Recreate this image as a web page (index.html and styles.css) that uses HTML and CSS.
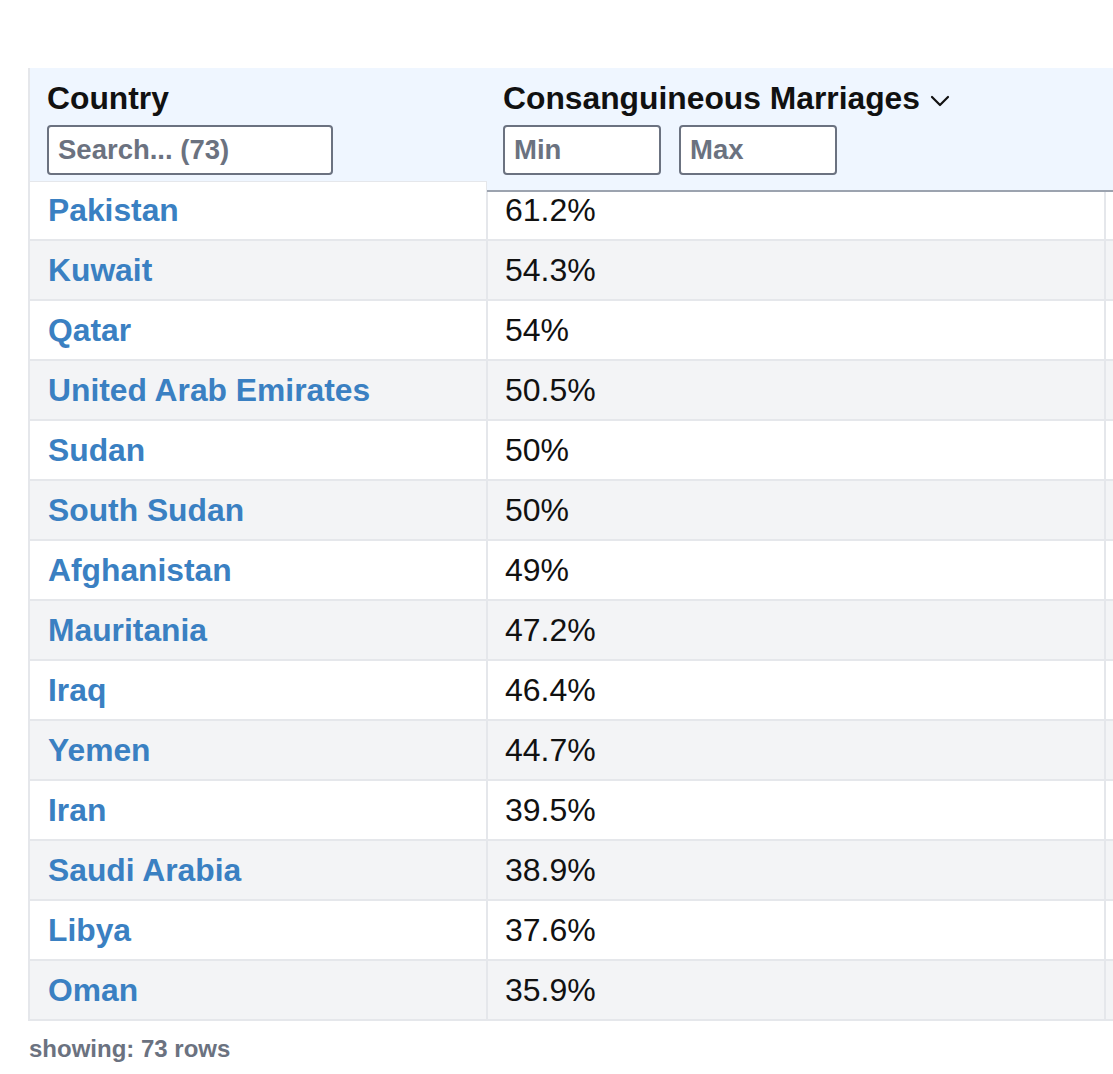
FILE: index.html
```html
<!DOCTYPE html>
<html lang="en">
<head>
<meta charset="utf-8">
<title>Consanguineous Marriages by Country</title>
<link rel="stylesheet" href="styles.css">
</head>
<body>
<div class="wrap">
  <table class="grid">
    <colgroup>
      <col class="col-country">
      <col class="col-value">
      <col class="col-extra">
    </colgroup>
    <thead>
      <tr>
        <th class="h-country">
          <div class="h-title">Country</div>
          <input class="f-search" type="text" placeholder="Search... (73)">
        </th>
        <th class="h-value">
          <div class="h-title">Consanguineous Marriages<svg class="chev" width="20" height="12" viewBox="0 0 20 12"><path d="M2 2 L10 10 L18 2" fill="none" stroke="#111" stroke-width="2.2" stroke-linecap="round" stroke-linejoin="round"/></svg></div>
          <div class="range">
            <input class="f-num" type="text" placeholder="Min">
            <input class="f-num" type="text" placeholder="Max">
          </div>
        </th>
        <th class="h-extra"></th>
      </tr>
    </thead>
    <tbody>
      <tr><td class="name"><a href="#">Pakistan</a></td><td class="val">61.2%</td><td></td></tr>
      <tr><td class="name"><a href="#">Kuwait</a></td><td class="val">54.3%</td><td></td></tr>
      <tr><td class="name"><a href="#">Qatar</a></td><td class="val">54%</td><td></td></tr>
      <tr><td class="name"><a href="#">United Arab Emirates</a></td><td class="val">50.5%</td><td></td></tr>
      <tr><td class="name"><a href="#">Sudan</a></td><td class="val">50%</td><td></td></tr>
      <tr><td class="name"><a href="#">South Sudan</a></td><td class="val">50%</td><td></td></tr>
      <tr><td class="name"><a href="#">Afghanistan</a></td><td class="val">49%</td><td></td></tr>
      <tr><td class="name"><a href="#">Mauritania</a></td><td class="val">47.2%</td><td></td></tr>
      <tr><td class="name"><a href="#">Iraq</a></td><td class="val">46.4%</td><td></td></tr>
      <tr><td class="name"><a href="#">Yemen</a></td><td class="val">44.7%</td><td></td></tr>
      <tr><td class="name"><a href="#">Iran</a></td><td class="val">39.5%</td><td></td></tr>
      <tr><td class="name"><a href="#">Saudi Arabia</a></td><td class="val">38.9%</td><td></td></tr>
      <tr><td class="name"><a href="#">Libya</a></td><td class="val">37.6%</td><td></td></tr>
      <tr><td class="name"><a href="#">Oman</a></td><td class="val">35.9%</td><td></td></tr>
    </tbody>
  </table>
</div>
<div class="footer">showing: 73 rows</div>
</body>
</html>
```

FILE: styles.css
```css
html, body {
  margin: 0;
  padding: 0;
  background: #ffffff;
}

body {
  font-family: "Liberation Sans", Arial, Helvetica, sans-serif;
  color: #111111;
  overflow: hidden;
}

.wrap {
  margin: 68px 0 0 28px;
  overflow: hidden;
}

.grid {
  border-collapse: separate;
  border-spacing: 0;
  table-layout: fixed;
  width: 1600px;
  border-left: 2px solid #e5e7eb;
}

.col-country { width: 458px; }
.col-value { width: 618px; }
.col-extra { width: 524px; }

thead th {
  background: #eff6ff;
  text-align: left;
  vertical-align: top;
  padding: 12px 0 6px 17px;
  font-weight: 700;
}

thead th.h-value {
  padding-left: 15px;
}

.h-value,
.h-extra {
  position: relative;
}

.h-value::after,
.h-extra::after {
  content: "";
  position: absolute;
  left: -1px;
  right: 0;
  top: 100%;
  height: 9px;
  background: #eff6ff;
  border-bottom: 2px solid #9ca3af;
  z-index: 2;
}

.h-title {
  font-size: 31.8px;
  line-height: 37px;
  height: 37px;
  margin-bottom: 8px;
  white-space: nowrap;
  display: flex;
  align-items: center;
}

.chev {
  margin-left: 10px;
  margin-top: 4px;
}

input {
  box-sizing: border-box;
  height: 50px;
  border: 2px solid #6b7280;
  border-radius: 4px;
  background: #ffffff;
  font-family: "Liberation Sans", Arial, Helvetica, sans-serif;
  font-weight: 700;
  font-size: 27.5px;
  padding: 0 9px;
  color: #111;
  display: block;
}

input::placeholder {
  color: #6b7280;
  opacity: 1;
}

.f-search {
  width: 286px;
}

.range {
  display: flex;
  gap: 18px;
}

.f-num {
  width: 158px;
}

tbody td {
  height: 58px;
  box-sizing: content-box;
  padding: 0 0 0 18px;
  border-right: 2px solid #e5e7eb;
  border-bottom: 2px solid #e5e7eb;
  background: #ffffff;
  vertical-align: middle;
  white-space: nowrap;
}

tbody tr:nth-child(even) td {
  background: #f3f4f6;
}

tbody tr:first-child td.name {
  box-shadow: inset 0 1px 0 #e5e7eb;
}

td.name a {
  color: #3a80c2;
  font-weight: 700;
  font-size: 31.8px;
  text-decoration: none;
}

td.val {
  font-size: 32px;
  color: #111111;
  padding-left: 17px;
}

.footer {
  margin: 14px 0 0 29px;
  font-size: 24px;
  line-height: 28px;
  font-weight: 700;
  color: #6b7280;
}
```
